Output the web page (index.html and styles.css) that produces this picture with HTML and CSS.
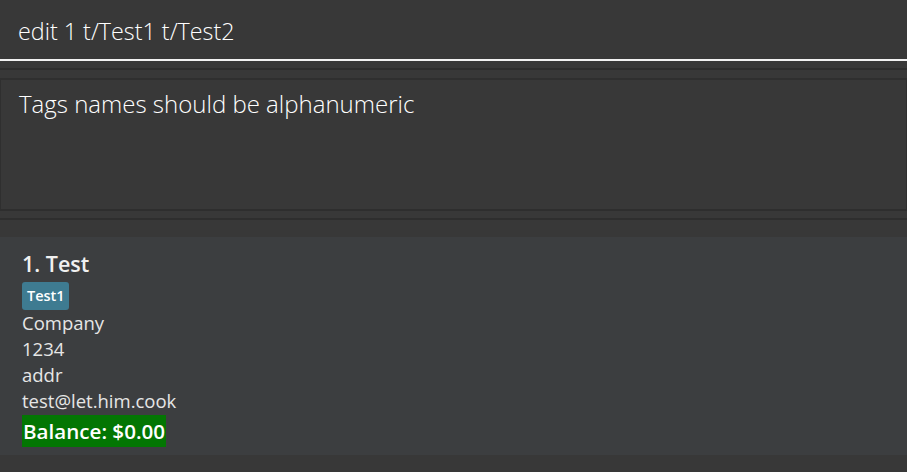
FILE: index.html
```html
<!DOCTYPE html>
<html>
<head>
<meta charset="utf-8">
<link rel="stylesheet" href="styles.css">
</head>
<body>
<div class="app">
  <div class="command-box">
    <div class="command-text">edit 1 t/Test1 t/Test2</div>
  </div>
  <div class="gap gap-a"></div>
  <div class="result-box">
    <div class="result-text">Tags names should be alphanumeric</div>
  </div>
  <div class="gap gap-b"></div>
  <div class="list">
    <div class="card">
      <div class="name">1. Test</div>
      <div class="tags"><span class="tag">Test1</span></div>
      <div class="field">Company</div>
      <div class="field">1234</div>
      <div class="field">addr</div>
      <div class="field">test@let.him.cook</div>
      <div class="balance-row"><span class="balance">Balance: $0.00</span></div>
    </div>
  </div>
  <div class="footer"></div>
</div>
</body>
</html>
```

FILE: styles.css
```css
html, body {
  margin: 0;
  padding: 0;
  background: #383838;
}
.app {
  width: 907px;
  height: 472px;
  display: flex;
  flex-direction: column;
  background: #383838;
  font-family: "Open Sans", "Noto Sans", sans-serif;
  overflow: hidden;
}
.command-box {
  box-sizing: border-box;
  border-bottom: 2px solid #f2f2f2;
  display: flex;
  align-items: center;
  padding-left: 18px;
  height: 61px;
}
.command-text {
  color: #ffffff;
  font-size: 23.3px;
  font-weight: 300;
  margin-top: 2px;
}
.gap-a {
  height: 19px;
  background: linear-gradient(#383838 0 7px, #2e2e2e 7px 9px, #383838 9px 17px, #2f2f2f 17px 19px);
}
.result-box {
  height: 129px;
  box-sizing: border-box;
  border-left: 1px solid #2f2f2f;
  border-right: 1px solid #2f2f2f;
  padding: 7px 0 0 18px;
}
.result-text {
  color: #ffffff;
  font-size: 24px;
  font-weight: 300;
}
.gap-b {
  height: 28px;
  background: linear-gradient(#2e2e2e 0 2px, #383838 2px 9px, #2e2e2e 9px 11px, #383838 11px);
}
.list {
  height: 218px;
  background: #3c3e40;
}
.card {
  padding: 12px 0 0 22px;
  display: flex;
  flex-direction: column;
  align-items: flex-start;
}
.name {
  color: #f0f0f0;
  font-size: 21.5px;
  font-weight: 600;
  line-height: 30px;
}
.tags {
  margin-top: 3px;
  display: flex;
}
.tag {
  background: #3e7b91;
  color: #ffffff;
  font-size: 14.5px;
  font-weight: 600;
  border-radius: 3px;
  padding: 0 4px 0 5px;
  line-height: 28px;
  height: 28px;
}
.field {
  color: #e6e6e6;
  font-size: 18.5px;
  line-height: 26px;
}
.balance-row {
  margin-top: 1px;
}
.balance {
  display: inline-block;
  background: #037603;
  color: #ffffff;
  font-size: 20.6px;
  font-weight: 600;
  line-height: 32px;
  padding: 0 1px 0 1px;
}
.footer {
  flex: 1;
  background: #383838;
}
```
